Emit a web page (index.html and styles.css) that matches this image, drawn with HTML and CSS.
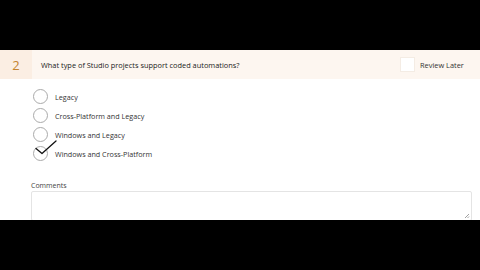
FILE: index.html
```html
<!DOCTYPE html>
<html>
<head>
<meta charset="utf-8">
<link rel="stylesheet" href="styles.css">
</head>
<body>
<div class="band"></div>
<main class="page">
  <div class="qhead">
    <div class="qnum">2</div>
    <div class="qtext">What type of Studio projects support coded automations?</div>
    <label class="review"><span class="box"></span><span>Review Later</span></label>
  </div>
  <ul class="options">
    <li><span class="radio"></span><span>Legacy</span></li>
    <li><span class="radio"></span><span>Cross-Platform and Legacy</span></li>
    <li><span class="radio"></span><span>Windows and Legacy</span></li>
    <li class="checked"><span class="radio"><svg class="tick" width="24" height="18" viewBox="0 0 24 18"><path d="M2 9.5 L8 14.5 L22 2" fill="none" stroke="#111" stroke-width="1.3" stroke-linecap="round" stroke-linejoin="round"/></svg></span><span>Windows and Cross-Platform</span></li>
  </ul>
  <div class="comments">
    <div class="clabel">Comments</div>
    <div class="carea"><svg class="grip" width="6" height="6" viewBox="0 0 6 6"><path d="M1 5 L5 1 M3.5 5 L5 3.5" stroke="#888" stroke-width="0.8"/></svg></div>
  </div>
</main>
<div class="band"></div>
</body>
</html>
```
FILE: styles.css
```css
html, body {
  margin: 0;
  padding: 0;
  background: #000;
}
body {
  width: 480px;
  height: 270px;
  overflow: hidden;
  font-family: "Open Sans", "Noto Sans", sans-serif;
  color: #333;
}
.band {
  height: 50px;
  background: #000;
}
.page {
  height: 170px;
  background: #fff;
  overflow: hidden;
  display: flex;
  flex-direction: column;
}
.qhead {
  height: 29px;
  background: #fdf6f0;
  display: flex;
  align-items: center;
}
.qnum {
  width: 32px;
  height: 29px;
  background: #fbeee3;
  color: #c4842f;
  font-size: 13px;
  display: flex;
  align-items: center;
  justify-content: center;
}
.qtext {
  margin-left: 9px;
  font-size: 7.4px;
  color: #222;
  flex: 1;
}
.review {
  display: flex;
  align-items: center;
  gap: 5px;
  font-size: 7.4px;
  color: #333;
  width: 80px;
}
.box {
  width: 15px;
  height: 15px;
  background: #fff;
  border: 1px solid #f4ece4;
  box-sizing: border-box;
}
.options {
  list-style: none;
  margin: 10px 0 0 33px;
  padding: 0;
  display: flex;
  flex-direction: column;
  gap: 4px;
}
.options li {
  display: flex;
  align-items: center;
  gap: 7px;
  font-size: 7.2px;
  color: #333;
  height: 15px;
}
.radio {
  position: relative;
  width: 15px;
  height: 15px;
  border: 1px solid #aaa;
  border-radius: 50%;
  box-sizing: border-box;
  background: #fff;
}
.tick {
  position: absolute;
  left: 0;
  top: -8px;
}
.comments {
  margin: 20px 0 0 31px;
  width: 441px;
}
.clabel {
  font-size: 7px;
  color: #444;
  margin-bottom: 1px;
}
.carea {
  position: relative;
  height: 28px;
  border: 1px solid #e4e4e4;
  border-radius: 2px;
}
.grip {
  position: absolute;
  right: 1px;
  bottom: 1px;
}
```
